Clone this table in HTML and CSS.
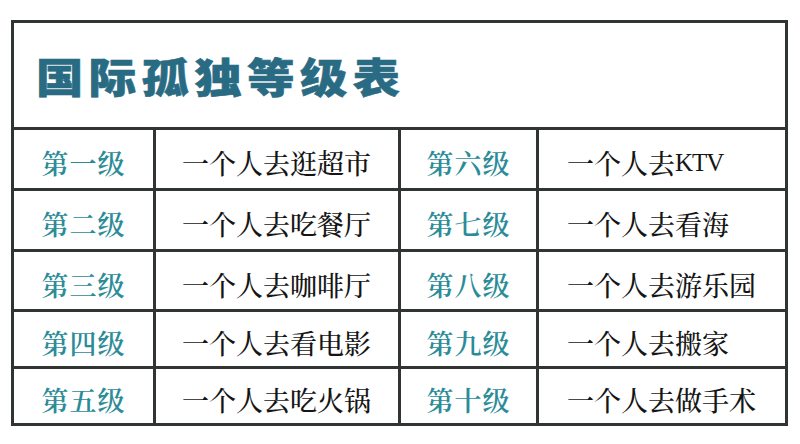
FILE: index.html
```html
<!DOCTYPE html>
<html lang="zh-CN">
<head>
<meta charset="utf-8">
<title>国际孤独等级表</title>
<link rel="stylesheet" href="styles.css">
</head>
<body>
<div class="sheet">
  <div class="title"><span class="title-text">国际孤独等级表</span></div>
  <div class="cell label">第一级</div><div class="cell item">一个人去逛超市</div>
  <div class="cell label">第六级</div><div class="cell item item-right">一个人去<span class="latin">KTV</span></div>
  <div class="cell label">第二级</div><div class="cell item">一个人去吃餐厅</div>
  <div class="cell label">第七级</div><div class="cell item item-right">一个人去看海</div>
  <div class="cell label">第三级</div><div class="cell item">一个人去咖啡厅</div>
  <div class="cell label">第八级</div><div class="cell item item-right">一个人去游乐园</div>
  <div class="cell label">第四级</div><div class="cell item">一个人去看电影</div>
  <div class="cell label">第九级</div><div class="cell item item-right">一个人去搬家</div>
  <div class="cell label">第五级</div><div class="cell item">一个人去吃火锅</div>
  <div class="cell label">第十级</div><div class="cell item item-right">一个人去做手术</div>
</div>
</body>
</html>
```
FILE: styles.css
```css
html, body {
  margin: 0;
  padding: 0;
  background: #ffffff;
}
body {
  width: 800px;
  height: 444px;
  overflow: hidden;
  padding: 20px 0 0 11px;
  box-sizing: border-box;
}
.sheet {
  width: 777px;
  height: 406px;
  box-sizing: border-box;
  background: #303433;
  padding: 3px;
  display: grid;
  grid-template-columns: 139px 242px 135px 246px;
  grid-template-rows: 104px 58px 58px 57px 54px 54px;
  gap: 3px;
}
.title {
  grid-column: 1 / 5;
  background: #ffffff;
  display: flex;
  align-items: center;
  padding-left: 22px;
}
.title-text {
  font-family: "Noto Sans CJK SC", sans-serif;
  font-weight: 900;
  font-size: 43px;
  letter-spacing: 5px;
  color: #2a6b84;
  display: inline-block;
  transform: scale(1.1, 0.96);
  transform-origin: left center;
  line-height: 1;
  -webkit-text-stroke: 0.6px #2a6b84;
}
.cell {
  background: #ffffff;
  display: flex;
  align-items: center;
  justify-content: center;
  padding-top: 7px;
  box-sizing: border-box;
  font-family: "Noto Serif CJK SC", "Noto Sans CJK SC", serif;
  font-size: 27px;
  line-height: 1;
}
.label {
  color: #2b8c98;
  letter-spacing: 1px;
  font-weight: 600;
}
.item {
  color: #151515;
  font-weight: 500;
  justify-content: flex-start;
  padding-left: 26px;
}
.item-right {
  padding-left: 28px;
}
.latin {
  font-family: "Liberation Serif", serif;
  font-size: 25px;
  letter-spacing: -1px;
  font-weight: 400;
}
```
